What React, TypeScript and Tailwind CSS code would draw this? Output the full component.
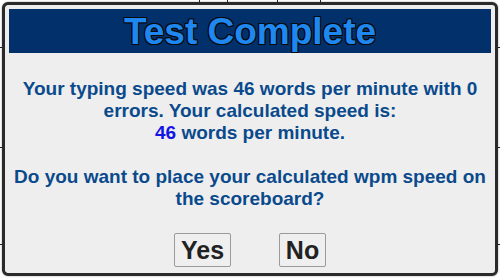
import React from "react";

export default function App() {
  return (
    <div className="relative w-[500px] h-[278px] overflow-hidden bg-white font-['Liberation_Sans',Arial,sans-serif]">
      {/* page behind the dialog */}
      <div className="flex flex-col w-full h-full">
        <div className="h-[48px] border-b border-[#222] flex text-[#1a1ad0] text-[14px]">
          <div className="w-[200px] border-r border-[#222]" />
          <div className="w-[28px] border-r border-[#222]" />
          <div className="w-[50px] border-r border-[#222]" />
          <div className="w-[43px] border-r border-[#222]" />
          <div className="flex-1" />
        </div>
        <div className="h-[100px] border-b border-[#222]" />
        <div className="h-[97px] border-b border-[#222]" />
        <div className="flex-1" />
      </div>

      {/* dialog */}
      <div className="absolute left-[2px] top-[2px] w-[496px] h-[274px] border-[3px] border-[#2a2a2a] rounded-[6px] bg-[#eeeeee] p-[4px] flex flex-col shadow-[0_0_2px_rgba(0,0,0,0.4)]">
        <div className="h-[44px] bg-[#01306b] flex items-center justify-center">
          <span className="text-[37px] leading-none font-bold text-[#1e88f0] [text-shadow:-1px_-1px_0_#0a0a0a,1px_-1px_0_#0a0a0a,-1px_1px_0_#0a0a0a,1px_1px_0_#0a0a0a,0_1px_0_#0a0a0a,0_-1px_0_#0a0a0a,1px_0_0_#0a0a0a,-1px_0_0_#0a0a0a]">
            Test Complete
          </span>
        </div>
        <div className="mt-[25px] flex flex-col items-center text-center text-[19px] leading-[22px] font-bold text-[#0a4a8c] whitespace-nowrap">
          <div>Your typing speed was 46 words per minute with 0</div>
          <div>errors. Your calculated speed is:</div>
          <div>
            <span className="text-[#1414e6]">46</span> words per minute.
          </div>
          <div className="h-[22px]" />
          <div>Do you want to place your calculated wpm speed on</div>
          <div>the scoreboard?</div>
        </div>
        <div className="mt-[23px] flex justify-center gap-[48px]">
          <button className="w-[57px] h-[34px] bg-[#efefef] border border-[#9a9a9a] rounded-[2px] text-[25px] leading-none font-bold text-[#222]">
            Yes
          </button>
          <button className="w-[47px] h-[34px] bg-[#efefef] border border-[#9a9a9a] rounded-[2px] text-[25px] leading-none font-bold text-[#222]">
            No
          </button>
        </div>
      </div>
    </div>
  );
}
